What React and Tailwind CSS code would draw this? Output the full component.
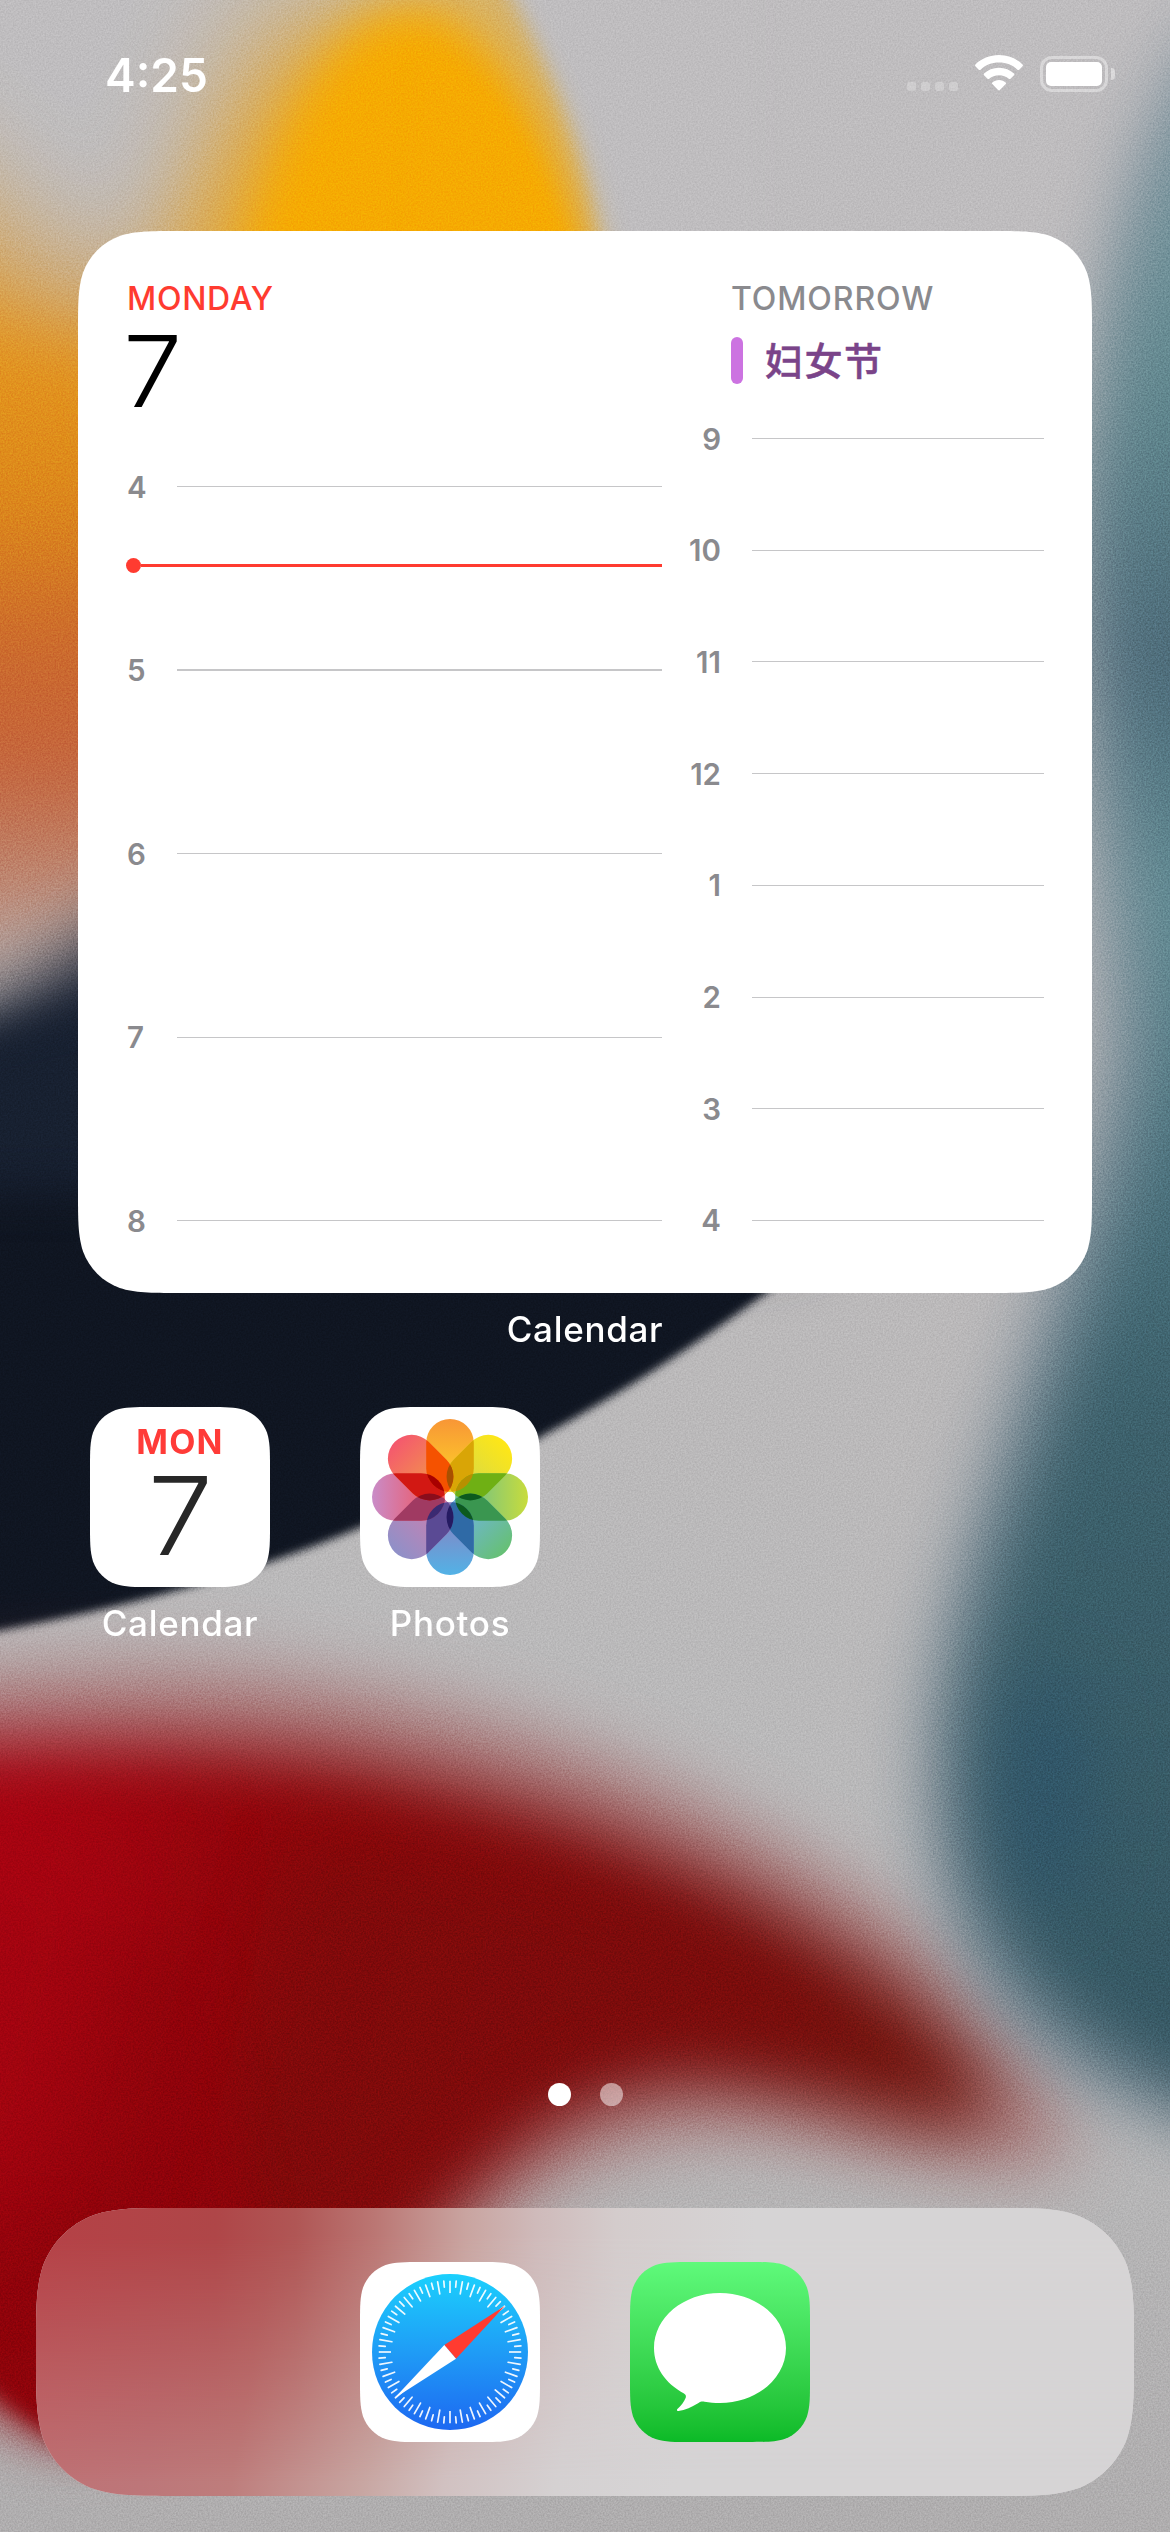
import React from "react";

/* Rounded rectangle with continuous (iOS style) corners. */
function squircle(w, h, r) {
  const a = 1.528665 * r, b = 1.088493 * r, c = 0.868407 * r;
  const d = 0.631494 * r, e = 0.074911 * r, f = 0.372824 * r, g = 0.16906 * r;
  return (
    `path("M${a} 0H${w - a}C${w - b} 0 ${w - c} 0 ${w - d} ${e}C${w - f} ${g} ${w - g} ${f} ${w - e} ${d}` +
    `C${w} ${c} ${w} ${b} ${w} ${a}V${h - a}C${w} ${h - b} ${w} ${h - c} ${w - e} ${h - d}` +
    `C${w - g} ${h - f} ${w - f} ${h - g} ${w - d} ${h - e}C${w - c} ${h} ${w - b} ${h} ${w - a} ${h}` +
    `H${a}C${b} ${h} ${c} ${h} ${d} ${h - e}C${f} ${h - g} ${g} ${h - f} ${e} ${h - d}` +
    `C0 ${h - c} 0 ${h - b} 0 ${h - a}V${a}C0 ${b} 0 ${c} ${e} ${d}C${g} ${f} ${f} ${g} ${d} ${e}C${c} 0 ${b} 0 ${a} 0Z")`
  );
}

function Blur({ id, s }) {
  return (
    <filter id={id} filterUnits="userSpaceOnUse" x="-400" y="-400" width="2000" height="3400" colorInterpolationFilters="sRGB">
      <feGaussianBlur stdDeviation={s} />
    </filter>
  );
}

function Wallpaper() {
  return (
    <svg className="absolute inset-0 h-full w-full" viewBox="0 0 1170 2532" preserveAspectRatio="none" aria-hidden="true">
      <defs>
        <Blur id="b4" s="4" />
        <Blur id="b10" s="10" />
        <Blur id="b22" s="22" />
        <Blur id="b35" s="35" />
        <Blur id="b60" s="60" />
        <linearGradient id="base" x1="0" y1="0" x2="0" y2="1">
          <stop offset="0" stopColor="#bfbdbf" />
          <stop offset="0.5" stopColor="#bbb9ba" />
          <stop offset="0.8" stopColor="#b9b9ba" />
          <stop offset="1" stopColor="#afadae" />
        </linearGradient>
        <linearGradient id="amber" gradientUnits="userSpaceOnUse" x1="0" y1="0" x2="60" y2="1000">
          <stop offset="0" stopColor="#e8a62a" />
          <stop offset="0.3" stopColor="#e6981f" />
          <stop offset="0.5" stopColor="#dd881a" />
          <stop offset="0.64" stopColor="#cc6a2c" />
          <stop offset="0.76" stopColor="#c5633a" />
          <stop offset="0.86" stopColor="#bd8068" />
          <stop offset="1" stopColor="#b9a19c" />
        </linearGradient>
        <linearGradient id="navy" gradientUnits="userSpaceOnUse" x1="0" y1="950" x2="0" y2="1350">
          <stop offset="0" stopColor="#1d2535" />
          <stop offset="0.5" stopColor="#0f1522" />
          <stop offset="1" stopColor="#0f1521" />
        </linearGradient>
        <linearGradient id="red" gradientUnits="userSpaceOnUse" x1="0" y1="1850" x2="1050" y2="2150">
          <stop offset="0" stopColor="#a20310" />
          <stop offset="0.3" stopColor="#880609" />
          <stop offset="0.6" stopColor="#7a0c0c" />
          <stop offset="0.85" stopColor="#6f120c" />
          <stop offset="1" stopColor="#74231c" />
        </linearGradient>
        <linearGradient id="teal" gradientUnits="userSpaceOnUse" x1="0" y1="100" x2="0" y2="2100">
          <stop offset="0" stopColor="#7799a1" />
          <stop offset="0.15" stopColor="#5f868d" />
          <stop offset="0.28" stopColor="#4c6a78" />
          <stop offset="0.4" stopColor="#5f8a92" />
          <stop offset="0.52" stopColor="#4b727d" />
          <stop offset="0.65" stopColor="#3d616c" />
          <stop offset="1" stopColor="#345662" />
        </linearGradient>
        <filter id="grain" x="0" y="0" width="100%" height="100%" colorInterpolationFilters="sRGB">
          <feTurbulence type="fractalNoise" baseFrequency="0.6" numOctaves="2" seed="9" />
          <feColorMatrix values="1.6 0 0 0 -0.3  1.6 0 0 0 -0.3  1.6 0 0 0 -0.3  0 0 0 0 1" />
        </filter>
      </defs>
      <rect width="1170" height="2532" fill="url(#base)" />

      {/* amber petal */}
      <path d="M-150 130C-40 170 60 320 150 300C210 240 220 60 310 -10L700 400L500 900L-150 980Z" fill="url(#amber)" opacity="0.75" filter="url(#b60)" />
      <path d="M-200 270L60 340L300 400L300 800L-200 960Z" fill="url(#amber)" filter="url(#b35)" />
      <path d="M640 -100C540 -120 400 -60 310 40C180 190 160 300 120 420L640 420Z" fill="#ebac27" opacity="0.55" filter="url(#b35)" />
      <path d="M605 420H760V-80H465C545 40 582 150 603 260Z" fill="#bfbdbf" filter="url(#b10)" />
      <path d="M400 10C330 20 285 120 250 230L190 420H604C596 280 572 180 528 100C490 40 450 0 400 10Z" fill="#f6aa02" filter="url(#b22)" />
      <path d="M420 60C475 60 528 130 556 210L580 270V400H400Z" fill="#f6aa02" filter="url(#b10)" />

      {/* dark navy sweep */}
      <path d="M-120 1060C20 1010 130 900 240 850L800 1000L800 1240H-120Z" fill="#1b2334" filter="url(#b35)" />
      <path d="M-100 1150H900L770 1290C640 1386 560 1427 450 1486C300 1562 140 1610 -100 1648Z" fill="url(#navy)" filter="url(#b4)" />
      <path d="M-100 1050L120 1000L300 990V1190H-100Z" fill="#172030" filter="url(#b22)" />

      {/* red wave */}
      <path d="M-200 1690C0 1665 190 1650 350 1685C560 1722 760 1815 940 1955C1030 2030 1080 2110 1065 2160C1030 2190 880 2140 760 2130C620 2130 520 2180 420 2290L250 2400L60 2440L-200 2300Z" fill="#a05050" opacity="0.55" filter="url(#b35)" />
      <path d="M-200 1765C0 1738 220 1728 380 1765C590 1808 750 1880 880 1975C960 2030 1010 2085 990 2125C930 2145 800 2085 700 2080C590 2080 510 2145 440 2230L330 2400H80C40 2430 0 2400 -200 2250Z" fill="url(#red)" filter="url(#b35)" />
      <path d="M300 1850C480 1850 700 1920 850 2030C800 2060 690 2030 600 2060C500 2090 430 2170 350 2240L200 2240Z" fill="#7c0b0b" opacity="0.7" filter="url(#b35)" />
      <path d="M-60 1900L200 1950L260 2250L180 2460L60 2436C20 2410 0 2385 -60 2320Z" fill="#8d030a" filter="url(#b22)" opacity="0.9" />
      <path d="M-60 2200H80V2448C30 2425 0 2395 -60 2340Z" fill="#8d030a" filter="url(#b10)" />
      <path d="M-200 1760L150 1830L60 2200L-200 2280Z" fill="#a80411" filter="url(#b60)" opacity="0.8" />

      {/* teal column */}
      <path d="M1210 20C1150 100 1110 220 1095 420C1060 640 1115 900 1105 1060C1070 1260 990 1420 945 1620C905 1780 925 1940 1010 2030C1080 2090 1150 2120 1260 2140L1400 20Z" fill="#8895a0" filter="url(#b35)" />
      <path d="M1220 60C1150 180 1120 300 1100 440C1060 660 1150 900 1140 1060C1110 1270 1030 1420 975 1620C935 1770 955 1910 1035 2000C1090 2060 1180 2100 1280 2135L1400 60Z" fill="url(#teal)" filter="url(#b35)" />
      <ellipse cx="1045" cy="1790" rx="45" ry="120" fill="#28506a" opacity="0.55" filter="url(#b35)" />
      <rect className="mix-blend-overlay" width="1170" height="2532" filter="url(#grain)" opacity="0.14" />
    </svg>
  );
}

function StatusBar() {
  return (
    <header className="flex h-[149px] shrink-0 items-center justify-between pr-[55px] pl-[105px] text-white">
      <span className="text-[46px] leading-none font-semibold">4:25</span>
      <div className="flex items-center">
        <div className="mt-[24px] flex gap-[5px] opacity-25">
          {[0, 1, 2, 3].map((i) => (
            <i key={i} className="h-[9px] w-[9px] rounded-[3px] bg-white" />
          ))}
        </div>
        <svg className="mt-[-3px] ml-[17px] h-[36px] w-[48px]" viewBox="0 0 48 36" fill="white" aria-hidden="true">
          <path d="M24 0C33.300 0 41.800 3.600 47.600 9.400C48.100 9.900 48.100 10.700 47.600 11.200L44.200 14.700C43.700 15.200 42.900 15.200 42.400 14.700C37.500 10 31.200 7.600 24 7.600S10.500 10 5.600 14.700C5.100 15.200 4.300 15.200 3.800 14.700L.4 11.200C-.1 10.700 -.1 9.900 .4 9.400C6.200 3.600 14.700 0 24 0Z" />
          <path d="M24 12.700C30 12.700 35.200 14.900 39 18.500C39.500 19 39.500 19.800 39 20.300L35.500 23.700C35 24.200 34.300 24.200 33.800 23.800C31.200 21.500 27.800 20.200 24 20.200S16.800 21.500 14.200 23.800C13.700 24.200 13 24.200 12.500 23.700L9 20.300C8.500 19.800 8.500 19 9 18.500C12.800 14.900 18 12.700 24 12.700Z" />
          <path d="M24 25C26.600 25 28.900 25.900 30.700 27.400C31.200 27.900 31.200 28.600 30.700 29.100L24.900 35.100C24.400 35.600 23.600 35.600 23.100 35.100L17.300 29.100C16.800 28.600 16.800 27.900 17.300 27.400C19.100 25.900 21.400 25 24 25Z" />
        </svg>
        <div className="ml-[17px] mt-[-1px] flex items-center">
          <div className="flex h-[36px] w-[68px] rounded-[12px] border-[3px] border-white/40 p-[3px]">
            <div className="flex-1 rounded-[5px] bg-white" />
          </div>
          <div className="ml-[3px] h-[12px] w-[4px] rounded-r-full bg-white/45" />
        </div>
      </div>
    </header>
  );
}

function HourRow({ label, align, thick }) {
  return (
    <div className="flex h-[31px] items-center">
      <span className={"mt-[1px] text-[29.500px] leading-[31px] font-semibold text-[#8a8a8e] " + (align === "right" ? "w-[39px] text-right" : "w-[50px]")}>
        {label}
      </span>
      <span className={(align === "right" ? "ml-[31px] " : "") + (thick ? "h-[2px] " : "h-px ") + "flex-1 bg-[#c6c6c8]"} />
    </div>
  );
}

function CalendarWidget() {
  return (
    <section className="mx-[78px] flex h-[1062px] bg-white pt-[47px] pr-[48px] pl-[49px]" style={{ clipPath: squircle(1014, 1062, 66) }}>
      <div className="w-[535px]">
        <h2 className="text-[32px] leading-[41px] font-[550] tracking-[0.700px] text-[#ff3b30]">MONDAY</h2>
        <p className="mt-[12px] ml-[-4px] w-[60px] origin-left scale-x-107 text-[99px] leading-[80px] font-light text-black">7</p>
        <div className="relative mt-[60px] flex h-[765px] flex-col justify-between">
          <HourRow label="4" />
          <HourRow label="5" thick />
          <HourRow label="6" />
          <HourRow label="7" />
          <HourRow label="8" />
          <div className="absolute top-[87px] right-0 left-[-1px] flex items-center">
            <i className="h-[15px] w-[15px] rounded-full bg-[#ff3b30]" />
            <i className="h-[3px] flex-1 bg-[#ff3b30]" />
          </div>
        </div>
      </div>
      <div className="ml-[20px] flex-1">
        <div className="ml-[49px]">
          <h2 className="text-[32px] leading-[41px] font-[550] tracking-[0.900px] text-[#8a8a8e]">TOMORROW</h2>
          <div className="mt-[18px] flex h-[47px] items-center">
            <i className="h-full w-[12px] rounded-[6px] bg-[#cc73e1]" />
            <span className="mt-[-5px] ml-[22px] font-['Noto_Sans_CJK_SC',sans-serif] text-[38px] leading-[47px] font-medium tracking-[1.500px] text-[#7a4489] [-webkit-text-stroke:0.500px_#7a4489]">妇女节</span>
          </div>
        </div>
        <div className="mt-[39px] flex h-[813px] flex-col justify-between">
          {["9", "10", "11", "12", "1", "2", "3", "4"].map((h) => (
            <HourRow key={h} label={h} align="right" />
          ))}
        </div>
      </div>
    </section>
  );
}

function AppIcon({ label, className, children }) {
  return (
    <div className="flex w-[180px] flex-col items-center">
      <div className={"h-[180px] w-[180px] " + className} style={{ clipPath: squircle(180, 180, 40.5) }}>
        {children}
      </div>
      {label && <span className="mt-[16px] text-[35px] leading-[40px] font-[450] tracking-[0.700px] whitespace-nowrap text-white">{label}</span>}
    </div>
  );
}

const PETALS = [
  [0, "#f89636", "#fdd028"],
  [45, "#ffe716", "#d4d84a"],
  [90, "#c8dc3c", "#6cc08a"],
  [135, "#66c074", "#70b4e0"],
  [180, "#52b2e6", "#8a80c0"],
  [225, "#8f90c8", "#cc80b0"],
  [270, "#c98cc8", "#f05560"],
  [315, "#f4586e", "#f29a48"],
];

/* Saturated tints where neighbouring petals cross, keyed by the wedge's rotation. */
const OVERLAPS = [
  [0, "#d9a506"],
  [45, "#6fb014"],
  [90, "#3a9650"],
  [135, "#2f6aa6"],
  [180, "#5a4a94"],
  [225, "#a03a62"],
  [270, "#d21813"],
  [315, "#f55200"],
];

function PhotosArt() {
  return (
    <svg className="h-full w-full" viewBox="0 0 180 180" aria-hidden="true">
      <defs>
        {PETALS.map(([a, outer, inner]) => (
          <linearGradient key={a} id={"petal" + a} x1="0" y1="0" x2="0" y2="1">
            <stop offset="0" stopColor={outer} />
            <stop offset="0.850" stopColor={inner} />
          </linearGradient>
        ))}
        <clipPath id="petalClip">
          <rect x="66.200" y="12" width="47.600" height="73" rx="23.800" />
        </clipPath>
      </defs>
      <g className="isolate">
        {PETALS.map(([a]) => (
          <rect key={a} x="66.200" y="12" width="47.600" height="73" rx="23.800" fill={`url(#petal${a})`} transform={`rotate(${a} 90 90)`} />
        ))}
        {OVERLAPS.map(([a, color]) => (
          <g key={a} transform={`rotate(${a} 90 90)`} clipPath="url(#petalClip)">
            <rect x="66.200" y="12" width="47.600" height="73" rx="23.800" fill={color} transform="rotate(45 90 90)" />
          </g>
        ))}
        {PETALS.map(([a]) => (
          <g key={a} transform={`rotate(${a} 90 90)`} clipPath="url(#petalClip)">
            <rect className="mix-blend-multiply" x="66.200" y="12" width="47.600" height="73" rx="23.800" fill={a === 315 ? "#a85000" : a === 135 ? "#251b62" : a === 45 || a === 90 ? "#0c5a1e" : a === 225 ? "#8a0d1c" : a === 270 ? "#a80000" : a === 0 ? "#b89000" : "#3a2a72"} transform="rotate(90 90 90)" />
          </g>
        ))}
      </g>
      <circle cx="90" cy="90" r="5.300" fill="white" />
    </svg>
  );
}

function SafariArt() {
  return (
    <svg className="h-full w-full" viewBox="0 0 180 180" aria-hidden="true">
      <defs>
        <linearGradient id="compass" x1="0" y1="0" x2="0" y2="1">
          <stop offset="0" stopColor="#1bd0fd" />
          <stop offset="0.5" stopColor="#1f9cf6" />
          <stop offset="1" stopColor="#1d68f1" />
        </linearGradient>
      </defs>
      <circle cx="90" cy="90" r="78" fill="url(#compass)" />
      {Array.from({ length: 72 }, (_, i) => (
        <line key={i} x1="90" x2="90" y1="18.800" y2={i % 2 ? 25 : 31} stroke="white" strokeWidth="1.700" strokeLinecap={i % 18 ? "round" : "butt"} opacity="0.92" transform={`rotate(${i * 5} 90 90)`} />
      ))}
      <path d="M145 43.700L84.300 83L96 96.700Z" fill="#ff3b30" />
      <path d="M34.300 136.300L84.300 83L96 96.700Z" fill="white" />
    </svg>
  );
}

function MessagesArt() {
  return (
    <svg className="h-full w-full" viewBox="0 0 180 180" fill="white" aria-hidden="true">
      <path d="M90 31C126.500 31 156 55.600 156 86S126.500 141 90 141C84.500 141 79.500 140.600 74.500 139.800C72 139.300 70.500 139.800 68.500 141C62 145 55 148.300 48.500 149C47 149.100 46.500 148 47.400 147C51 143.800 54.200 139.800 55.600 136C56.300 134 55.800 132.800 54 131.600C35 121 24 105 24 86C24 55.600 53.500 31 90 31Z" />
    </svg>
  );
}

function Dock() {
  return (
    <footer className="relative mx-[36px] h-[288px] bg-[#d6d4d5]" style={{ clipPath: squircle(1098, 288, 92) }}>
      <div className="absolute inset-0 bg-[linear-gradient(100deg,#c07073_0px,#bd7679_150px,#be7d7c_240px,#c8a6a2_370px,#d1c1c1_450px,#d5d1d2_560px,#d6d4d5_680px)]" />
      <div className="absolute inset-0 bg-[linear-gradient(90deg,#b54146_0px,#af4648_180px,#b05655_260px,#bb7774_340px,#c9a4a0_430px,#cfbaba_500px,#d4cccc_580px,#d6d4d5_720px)] [mask-image:linear-gradient(to_bottom,black_10%,transparent_95%)]" />
      <div className="relative flex h-full items-center justify-center gap-[90px]">
        <AppIcon className="bg-white"><SafariArt /></AppIcon>
        <AppIcon className="bg-linear-to-b from-[#5ffa7b] to-[#0aba26]"><MessagesArt /></AppIcon>
      </div>
    </footer>
  );
}

export default function App() {
  return (
    <main className="relative h-[2532px] w-[1170px] overflow-hidden font-['Inter','Noto_Sans_CJK_SC',sans-serif]">
      <Wallpaper />
      <div className="relative flex h-full flex-col">
        <StatusBar />
        <div className="mt-[82px]">
          <CalendarWidget />
          <p className="mt-[16px] text-center text-[35px] leading-[40px] font-[450] tracking-[0.700px] text-white">Calendar</p>
        </div>
        <div className="mt-[58px] flex gap-[90px] px-[90px]">
          <AppIcon label="Calendar" className="flex flex-col items-center bg-white pt-[15px]">
            <span className="text-[34px] leading-[40px] font-bold tracking-[1.200px] text-[#ff3b38]">MON</span>
            <span className="mt-[13px] scale-x-107 text-[109px] leading-[80px] font-light text-[#272727]">7</span>
          </AppIcon>
          <AppIcon label="Photos" className="bg-white"><PhotosArt /></AppIcon>
        </div>
        <div className="mt-auto flex justify-center gap-[29px]">
          <i className="h-[23px] w-[23px] rounded-full bg-white" />
          <i className="h-[23px] w-[23px] rounded-full bg-white/50" />
        </div>
        <div className="mt-[102px] pb-[36px]">
          <Dock />
        </div>
      </div>
    </main>
  );
}
